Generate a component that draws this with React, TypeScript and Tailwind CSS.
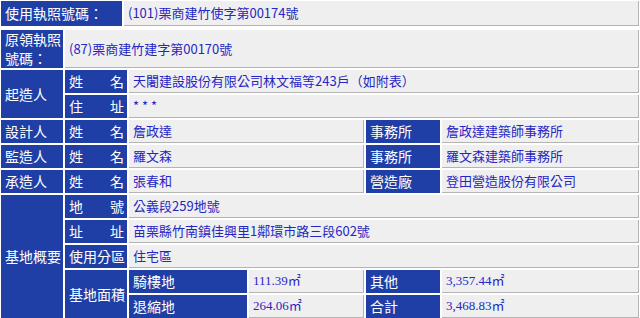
import React from 'react';

const font = "font-['Noto_Sans_CJK_TC','Noto_Sans_CJK_SC',sans-serif]";

const Label: React.FC<{ className?: string; children: React.ReactNode }> = ({ className = '', children }) => (
  <div className={`bg-[#1f3fa6] text-white text-[14px] leading-[17px] flex items-center pl-[4px] pr-[3px] whitespace-nowrap ${className}`}>
    {children}
  </div>
);

const Split: React.FC<{ a: string; b: string; className?: string }> = ({ a, b, className = '' }) => (
  <Label className={`justify-between ${className}`}>
    <span>{a}</span>
    <span>{b}</span>
  </Label>
);

const Value: React.FC<{ className?: string; children?: React.ReactNode }> = ({ className = '', children }) => (
  <div className={`bg-[#efefef] border-r border-b border-[#b4b4b4] text-[#2626c4] text-[13px] flex items-center pl-[4px] whitespace-nowrap overflow-hidden ${className}`}>
    {children}
  </div>
);

const serif = "font-['Liberation_Serif','Noto_Sans_CJK_TC',serif]";

export default function App() {
  return (
    <div className={`w-[640px] h-[318px] bg-white overflow-hidden pt-px pl-px pr-[1px] ${font}`}>
      <div className="flex gap-[2px] h-[25px]">
        <Label className="w-[121px] shrink-0">使用執照號碼：</Label>
        <Value className="flex-1">(101)栗商建竹使字第00174號</Value>
      </div>

      <div className="flex gap-[2px] h-[38px] mt-[4px]">
        <Label className="w-[62px] shrink-0 text-[13px] flex-col items-start justify-center">
          <div className="leading-[19px]">原領執照</div>
          <div className="leading-[19px]">號碼：</div>
        </Label>
        <Value className="flex-1">(87)栗商建竹建字第00170號</Value>
      </div>

      <div className="grid grid-cols-[62px_62px_118px_115px_74px_1fr] grid-rows-[repeat(10,23px)] gap-[2px] mt-[2px]">
        <Label className="row-span-2">起造人</Label>
        <Split a="姓" b="名" />
        <Value className="col-span-4">天闍建設股份有限公司林文福等243戶（如附表）</Value>
        <Split a="住" b="址" />
        <Value className="col-span-4 text-[11px]">*&nbsp;*&nbsp;*</Value>

        <Label>設計人</Label>
        <Split a="姓" b="名" />
        <Value className="col-span-2">詹政達</Value>
        <Label>事務所</Label>
        <Value>詹政達建築師事務所</Value>

        <Label>監造人</Label>
        <Split a="姓" b="名" />
        <Value className="col-span-2">羅文森</Value>
        <Label>事務所</Label>
        <Value>羅文森建築師事務所</Value>

        <Label>承造人</Label>
        <Split a="姓" b="名" />
        <Value className="col-span-2">張春和</Value>
        <Label>營造廠</Label>
        <Value>登田營造股份有限公司</Value>

        <Label className="row-span-5">基地概要</Label>
        <Split a="地" b="號" />
        <Value className="col-span-4">公義段259地號</Value>
        <Split a="址" b="址" />
        <Value className="col-span-4">苗栗縣竹南鎮佳興里1鄰環市路三段602號</Value>
        <Label>使用分區</Label>
        <Value className="col-span-4">住宅區</Value>

        <Label className="row-span-2">基地面積</Label>
        <Label>騎樓地</Label>
        <Value className={serif}>111.39㎡</Value>
        <Label>其他</Label>
        <Value className={serif}>3,357.44㎡</Value>
        <Label>退縮地</Label>
        <Value className={serif}>264.06㎡</Value>
        <Label>合計</Label>
        <Value className={serif}>3,468.83㎡</Value>
      </div>
    </div>
  );
}
